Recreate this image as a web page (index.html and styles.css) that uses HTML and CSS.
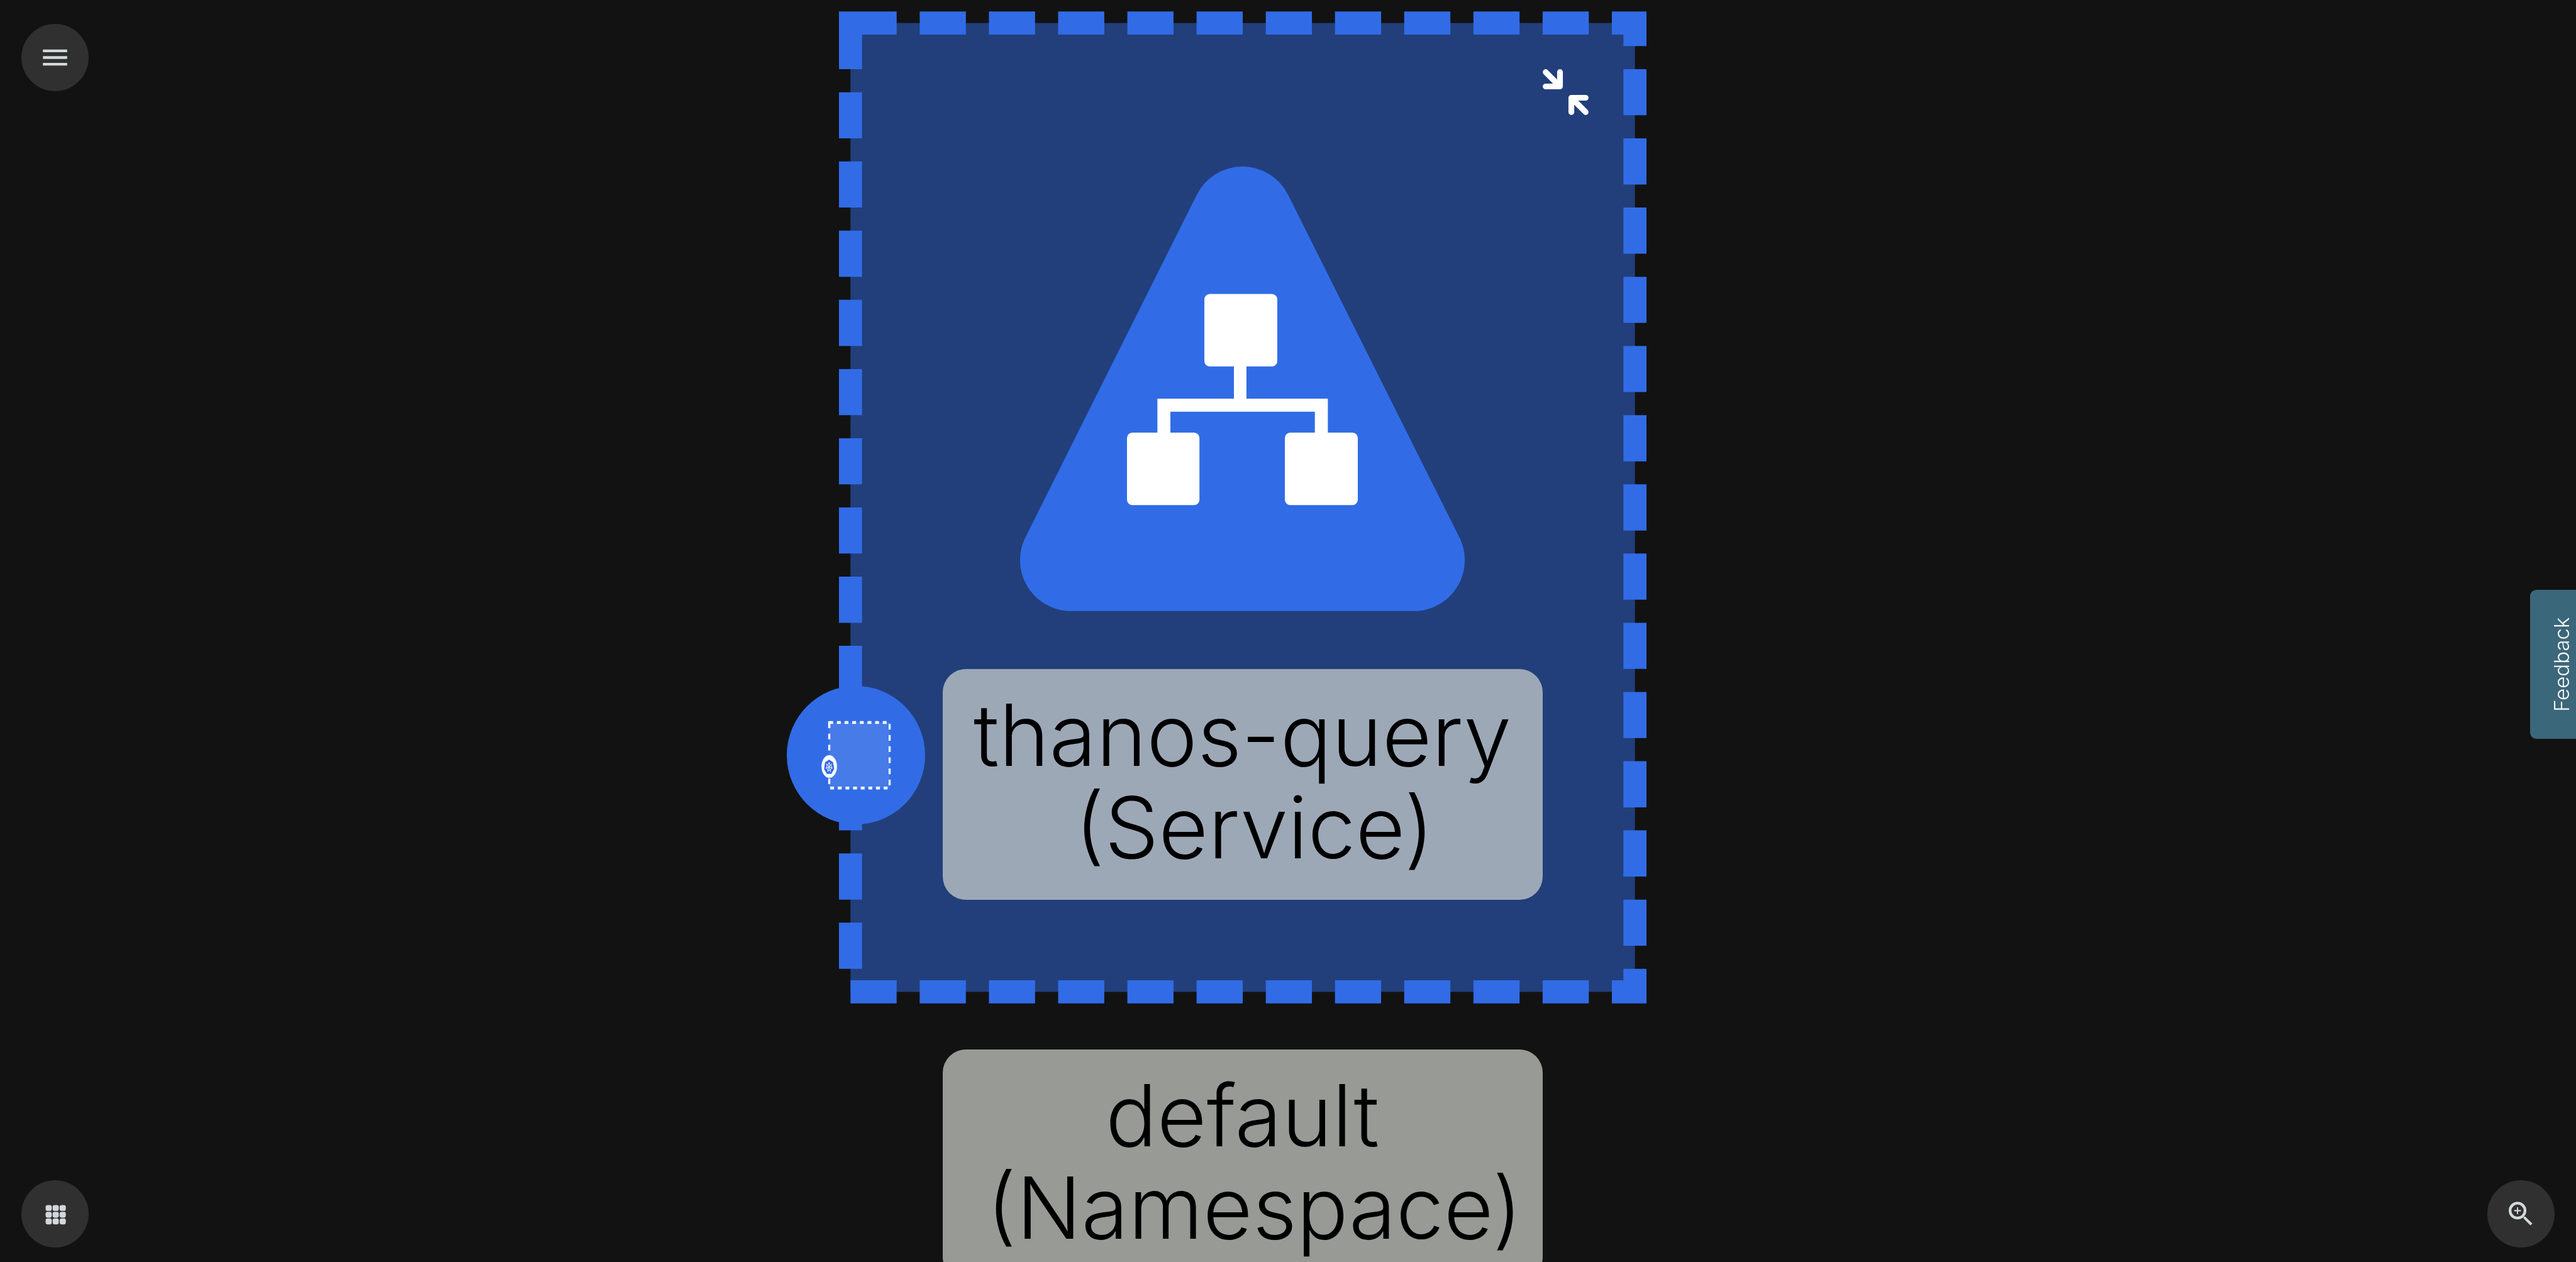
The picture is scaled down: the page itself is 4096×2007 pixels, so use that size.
FILE: index.html
```html
<!DOCTYPE html>
<html lang="en">
<head>
  <meta charset="utf-8">
  <meta name="viewport" content="width=device-width, initial-scale=1">
  <title>default (Namespace)</title>
  <link rel="stylesheet" href="styles.css">
</head>
<body>
  <main class="canvas">
    <section class="namespace" aria-label="default namespace">
      <div class="group">
        <svg class="group-frame" viewBox="-0.5 -0.5 35 43" aria-hidden="true">
          <rect width="34" height="42" stroke-dasharray="2 1"/>
        </svg>

        <button class="collapse" type="button" aria-label="Collapse group">
          <svg viewBox="0 0 311 311" aria-hidden="true">
            <path d="M20 20L117 117M117 20V117H20M291 291L194 194M194 291V194H291"/>
          </svg>
        </button>

        <svg class="service-shape" viewBox="2281 372 994 995" aria-hidden="true">
          <path class="triangle" d="M2676 436L2293 1202A114 114 0 0 0 2395 1367H3161A114 114 0 0 0 3263 1202L2880 436A114 114 0 0 0 2676 436Z"/>
          <g class="topology">
            <rect x="2693" y="658" width="163" height="162" rx="12"/>
            <rect x="2520" y="968" width="162" height="162" rx="12"/>
            <rect x="2873" y="968" width="163" height="162" rx="12"/>
            <path d="M2759 815H2787V892H2969V975H2940V921H2617V975H2588V892H2759Z"/>
          </g>
        </svg>

        <h2 class="label"><span>thanos-query</span><span> (Service)</span></h2>

        <svg class="kind-badge" viewBox="118 163 928 928" aria-hidden="true">
          <circle class="disc" cx="582" cy="627" r="464"/>
          <rect class="area" x="403" y="408" width="405" height="439"/>
          <g class="dashes">
            <path stroke-width="19" stroke-dasharray="26 25.3" d="M403 408H790M409 847H797"/>
            <path stroke-width="14" stroke-dasharray="38 36.8" d="M808 417V830M403 408V600M403 783V821"/>
            <path stroke-width="14" d="M403 399V446"/>
          </g>
          <ellipse class="hub" cx="403" cy="703" rx="52" ry="76"/>
          <path class="disc" d="M402 657L429 674L436 720L417 752H387L368 720L375 674Z"/>
          <g class="wheel">
            <ellipse cx="402" cy="706" rx="16" ry="24"/>
            <path d="M402 706V672M402 706L422 684M402 706L426 714M402 706L412 739M402 706L392 739M402 706L378 714M402 706L382 684"/>
          </g>
        </svg>
      </div>

      <h1 class="label"><span>default</span><span> (Namespace)</span></h1>
    </section>
  </main>

  <button class="round menu" type="button" aria-label="Menu">
    <svg viewBox="0 0 150 150" aria-hidden="true">
      <path d="M48 57H102V63H48ZM48 72H102V78H48ZM48 87H102V93H48Z"/>
    </svg>
  </button>

  <button class="round apps" type="button" aria-label="Applications">
    <svg viewBox="0 0 450 450" aria-hidden="true">
      <rect x="162" y="166" width="41" height="39" rx="13"/>
      <rect x="209" y="166" width="41" height="39" rx="13"/>
      <rect x="256" y="166" width="41" height="39" rx="13"/>
      <rect x="162" y="211" width="41" height="39" rx="13"/>
      <rect x="209" y="211" width="41" height="39" rx="13"/>
      <rect x="256" y="211" width="41" height="39" rx="13"/>
      <rect x="162" y="256" width="41" height="39" rx="13"/>
      <rect x="209" y="256" width="41" height="39" rx="13"/>
      <rect x="256" y="256" width="41" height="39" rx="13"/>
    </svg>
  </button>

  <button class="round zoom" type="button" aria-label="Zoom in">
    <svg viewBox="0 0 450 450" aria-hidden="true">
      <circle class="lens" cx="202" cy="203" r="50"/>
      <path d="M198 181H206V199H225V208H206V226H198V208H180V199H198Z"/>
      <path d="M243 244H254L301 289L288 302L243 257Z"/>
    </svg>
  </button>

  <button class="feedback" type="button">Feedback</button>
</body>
</html>
```
FILE: styles.css
```css
:root {
  --blue: #316ce6;
  --icon: #d2d8db;
  --edge: 34px;
}

* {
  box-sizing: border-box;
}

body {
  margin: 0;
  background: #121212;
  font-family: Inter, "Liberation Sans", sans-serif;
  font-weight: 300;
}

button {
  display: block;
  padding: 0;
  border: 0;
  background: none;
  font: inherit;
  cursor: pointer;
}

svg {
  display: block;
}

/* Graph canvas */

.canvas {
  display: flex;
  justify-content: center;
  height: 100vh;
  padding: 18px 145px 0 0;
  overflow: hidden;
}

.namespace {
  display: flex;
  flex-direction: column;
  align-items: center;
  gap: 73px;
}

.group {
  position: relative;
  display: flex;
  flex-direction: column;
  align-items: center;
  width: 1284px;
  padding: 92px 92px 165px;
}

.group-frame {
  position: absolute;
  inset: 0;
  width: 100%;
  height: 100%;
  fill: #223f7b;
  stroke: var(--blue);
}

.collapse {
  position: relative;
  align-self: flex-end;
  width: 73px;
  margin-bottom: 81px;
}

.collapse path {
  fill: none;
  stroke: #fff;
  stroke-width: 39;
  stroke-linecap: round;
  stroke-linejoin: round;
}

.service-shape {
  position: relative;
  width: 707px;
  height: 708px;
  margin-bottom: 92px;
}

.triangle,
.disc {
  fill: var(--blue);
}

.topology,
.hub {
  fill: #fff;
}

.label {
  position: relative;
  flex: none;
  display: flex;
  flex-direction: column;
  align-items: center;
  width: 954px;
  margin: 0;
  padding: 31px 0 42px;
  border-radius: 37px;
  background: #9da8b7;
  color: #000;
  font-size: 136px;
  font-weight: 300;
  line-height: 147px;
  white-space: pre;
}

.namespace > .label {
  background: #989a96;
}

.kind-badge {
  position: absolute;
  top: 1073px;
  left: -83px;
  width: 220px;
  height: 220px;
}

.area {
  fill: #477be8;
}

.dashes {
  fill: none;
  stroke: #fff;
}

.wheel {
  fill: none;
  stroke: #fff;
  stroke-width: 4;
}

/* Floating controls */

.round {
  position: fixed;
  width: 107px;
  height: 107px;
  border-radius: 50%;
  background: #303030;
  fill: var(--icon);
}

.menu {
  top: 38px;
  left: var(--edge);
}

.apps {
  bottom: 23px;
  left: var(--edge);
}

.zoom {
  right: var(--edge);
  bottom: 23px;
}

.lens {
  fill: none;
  stroke: var(--icon);
  stroke-width: 18;
}

.feedback {
  position: fixed;
  top: 938px;
  right: 0;
  width: 73px;
  height: 237px;
  padding-right: 28px;
  border-radius: 0 10px 10px 0;
  background: #3b677a;
  color: #f7f7f7;
  font-size: 33px;
  line-height: 40px;
  text-align: center;
  writing-mode: vertical-rl;
  transform: rotate(180deg);
}
```
